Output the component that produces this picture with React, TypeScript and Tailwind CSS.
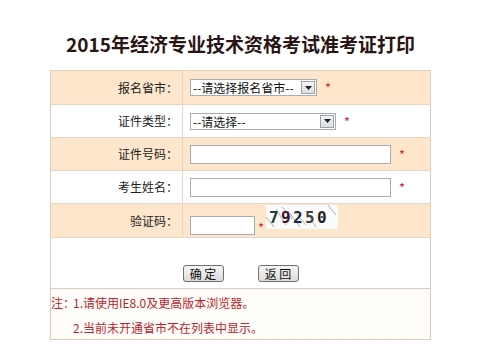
import React from 'react';

const font = { fontFamily: '"Noto Sans CJK SC", "Noto Sans", sans-serif' };

function FakeSelect({ text, width }: { text: string; width: string }) {
  return (
    <div className={`${width} h-[17px] flex items-center justify-between border border-[#a5acb2] bg-white pl-[2px] pr-[1px]`}>
      <span className="text-[12px] leading-[15px] text-[#111] whitespace-nowrap">{text}</span>
      <span className="w-[14px] h-[13px] flex items-center justify-center border border-[#9aa3ad] bg-gradient-to-b from-[#f7f7f7] to-[#d9dde2]">
        <svg width="7" height="4" viewBox="0 0 7 4">
          <path d="M0 0h7L3.5 4z" fill="#222" />
        </svg>
      </span>
    </div>
  );
}

function Star() {
  return <span className="ml-[8px] text-[13px] leading-none text-[#c8303a]">*</span>;
}

function Captcha() {
  const digits = [
    { d: '7', x: 3, c: '#1e3b3b' },
    { d: '9', x: 15, c: '#3b1232' },
    { d: '2', x: 27, c: '#1c2242' },
    { d: '5', x: 39, c: '#3f3f3f' },
    { d: '0', x: 51, c: '#222222' },
  ];
  return (
    <svg width="72" height="24" viewBox="0 0 72 24" className="ml-[2px] mb-[8px]">
      <rect width="72" height="24" fill="#fbfbfb" />
      {[
        [0, 12, 8, 22],
        [10, 4, 20, 20],
        [16, 2, 26, 14],
        [22, 6, 34, 22],
        [30, 8, 40, 20],
        [40, 6, 50, 22],
        [62, 0, 70, 10],
      ].map(([x1, y1, x2, y2], i) => (
        <line key={i} x1={x1} y1={y1} x2={x2} y2={y2} stroke="#9a9a9a" strokeWidth="0.8" />
      ))}
      {digits.map((g) => (
        <text
          key={g.d + g.x}
          x={g.x}
          y="18"
          fill={g.c}
          fontSize="16"
          fontWeight="bold"
          fontFamily='"DejaVu Sans Mono", monospace'
        >
          {g.d}
        </text>
      ))}
    </svg>
  );
}

export default function App() {
  const rows = [
    { label: '报名省市：', bg: 'bg-[#fde6cc]', h: 'h-[34px]', field: <><FakeSelect text="--请选择报名省市--" width="w-[127px]" /><Star /></> },
    { label: '证件类型：', bg: 'bg-white', h: 'h-[33px]', field: <><FakeSelect text="--请选择--" width="w-[146px]" /><Star /></> },
    { label: '证件号码：', bg: 'bg-[#fde6cc]', h: 'h-[33px]', field: <><input className="w-[201px] h-[19px] border border-[#a5acb2] bg-white" /><Star /></> },
    { label: '考生姓名：', bg: 'bg-white', h: 'h-[33px]', field: <><input className="w-[201px] h-[19px] border border-[#a5acb2] bg-white" /><Star /></> },
    {
      label: '验证码：',
      bg: 'bg-[#fde6cc]',
      h: 'h-[34px]',
      field: (
        <>
          <input className="w-[65px] h-[19px] mt-[10px] border border-[#a5acb2] bg-white" />
          <span className="ml-[3px] mt-[14px] text-[13px] leading-none text-[#c8303a]">*</span>
          <Captcha />
        </>
      ),
    },
  ];

  return (
    <div className="w-[499px] h-[350px] bg-white overflow-hidden" style={font}>
      <div className="ml-[50px] w-[381px]">
        <h1 className="pt-[32px] pb-[14px] text-center text-[19px] font-bold leading-[24px] text-[#2b1414]">
          2015年经济专业技术资格考试准考证打印
        </h1>

        <div className="border border-[#dfcdbb]">
          {rows.map((r) => (
            <div key={r.label} className={`flex ${r.h} ${r.bg} border-b border-[#e6d5c3]`}>
              <div className="w-[132px] flex items-center justify-end pr-[4px] border-r border-[#e6d5c3] text-[12px] text-[#222]">
                {r.label}
              </div>
              <div className="flex-1 flex items-center pl-[7px]">{r.field}</div>
            </div>
          ))}

          <div className="h-[51px] flex justify-center gap-[34px] pt-[27px] border-b border-[#dfcdbb] bg-white">
            {['确 定', '返 回'].map((b) => (
              <button
                key={b}
                className="w-[41px] h-[17px] flex items-center justify-center rounded-[3px] border border-[#707070] bg-gradient-to-b from-[#f6f6f6] to-[#dcdcdc] text-[12px] leading-none text-[#111]"
              >
                {b}
              </button>
            ))}
          </div>

          <div className="h-[50px] flex pt-[1px] bg-[#fffdfa] text-[12px] leading-[25px] text-[#b8262c]">
            <span className="w-[22px] shrink-0">注：</span>
            <div>
              <div>1.请使用IE8.0及更高版本浏览器。</div>
              <div>2.当前未开通省市不在列表中显示。</div>
            </div>
          </div>
        </div>
      </div>
    </div>
  );
}
